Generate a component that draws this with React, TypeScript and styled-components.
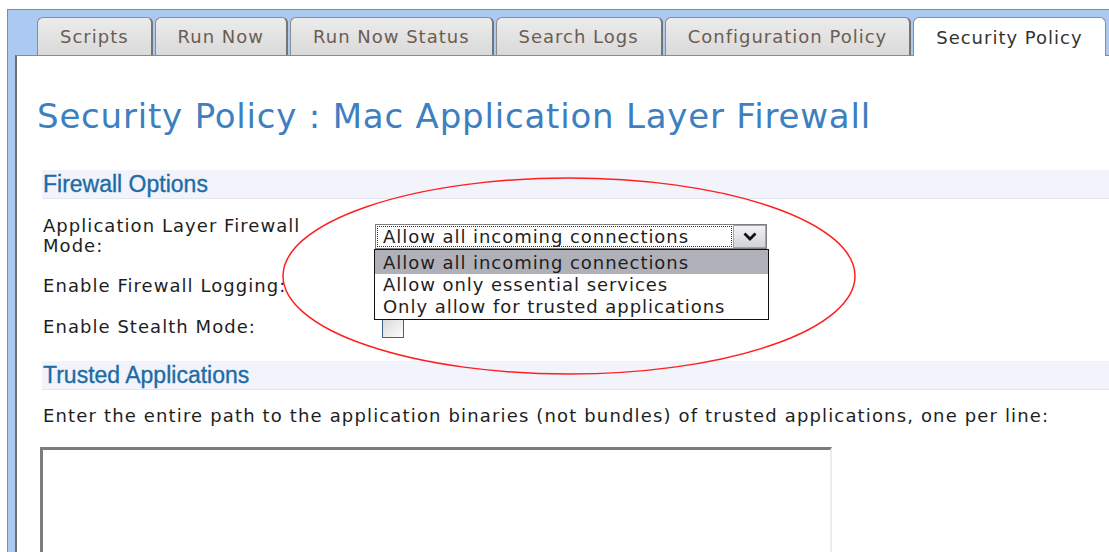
import React from 'react';
import styled, { createGlobalStyle } from 'styled-components';

const GlobalStyle = createGlobalStyle`
  html, body {
    margin: 0;
    padding: 0;
    background: #fff;
    overflow: hidden;
  }
`;

const tabs = ['Scripts', 'Run Now', 'Run Now Status', 'Search Logs', 'Configuration Policy', 'Security Policy'];
const modes = [
  'Allow all incoming connections',
  'Allow only essential services',
  'Only allow for trusted applications',
];

export default function App() {
  return (
    <>
      <GlobalStyle />
      <Page>
        <Frame>
          <TabBar>
            {tabs.map(t => (
              <Tab key={t} $active={t === 'Security Policy'}>
                {t}
              </Tab>
            ))}
          </TabBar>
          <Panel>
            <Title>Security Policy : Mac Application Layer Firewall</Title>

            <SectionBar>Firewall Options</SectionBar>
            <FormGrid>
              <Label>Application Layer Firewall Mode:</Label>
              <Field>
                <Select>
                  <SelectValue>{modes[0]}</SelectValue>
                  <SelectArrow>
                    <svg width='14' height='9' viewBox='0 0 14 9'>
                      <polyline points='1.5,1.5 7,7 12.5,1.5' fill='none' stroke='#111' strokeWidth='2.8' />
                    </svg>
                  </SelectArrow>
                  <OptionList>
                    {modes.map((m, i) => (
                      <Option key={m} $selected={i === 0}>
                        {m}
                      </Option>
                    ))}
                  </OptionList>
                </Select>
              </Field>

              <Label>Enable Firewall Logging:</Label>
              <Field>
                <CheckBox />
              </Field>

              <Label>Enable Stealth Mode:</Label>
              <Field>
                <CheckBox />
              </Field>
            </FormGrid>

            <SectionBar $gap={23}>Trusted Applications</SectionBar>
            <Hint>
              Enter the entire path to the application binaries (not bundles) of trusted applications, one per
              line:
            </Hint>
            <PathBox />
          </Panel>
        </Frame>

        {/* red marker drawn around the mode dropdown */}
        <Marker width='1109' height='552' viewBox='0 0 1109 552'>
          <ellipse cx='569' cy='276' rx='286' ry='98' fill='none' stroke='#ff1f1f' strokeWidth='1.5' />
        </Marker>
      </Page>
    </>
  );
}

const Page = styled.div`
  position: relative;
  width: 1109px;
  height: 552px;
  overflow: hidden;
  box-sizing: border-box;
  padding: 9px 0 0 7px;
  font-family: 'DejaVu Sans', Verdana, sans-serif;
`;

const Frame = styled.div`
  width: 1200px;
  border-top: 1px solid #8a8a8a;
  border-left: 1px solid #8a8a8a;
  background: #abc9f1;
  padding-left: 7px;
`;

const TabBar = styled.div`
  position: relative;
  z-index: 1;
  display: flex;
  align-items: flex-end;
  gap: 2px;
  padding: 7px 0 0 22px;
`;

const Tab = styled.div<{ $active?: boolean }>`
  box-sizing: border-box;
  height: ${p => (p.$active ? '39px' : '38px')};
  margin-bottom: ${p => (p.$active ? '-1px' : '0')};
  display: flex;
  align-items: center;
  padding: 0 22px;
  border: 1px solid #8c8c8c;
  border-bottom: none;
  border-right: ${p => (p.$active ? '1px solid #8c8c8c' : '2px solid #747474')};
  border-radius: 6px 6px 0 0;
  background: ${p => (p.$active ? '#fff' : 'linear-gradient(#ececec, #d9d9d9)')};
  color: ${p => (p.$active ? '#333' : '#6b5d51')};
  font-size: 18px;
  letter-spacing: 1px;
  white-space: nowrap;
`;

const Panel = styled.div`
  background: #fff;
  border-top: 1px solid #8a8a8a;
  border-left: 2px solid #6e6e6e;
  padding: 40px 0 0 25px;
  min-height: 520px;
`;

const Title = styled.h1`
  margin: 0 0 34px -5px;
  font-size: 34px;
  line-height: 40px;
  font-weight: normal;
  letter-spacing: 0.8px;
  color: #3d7fc0;
`;

const SectionBar = styled.div<{ $gap?: number }>`
  box-sizing: border-box;
  height: 29px;
  margin-top: ${p => p.$gap ?? 0}px;
  padding-left: 1px;
  background: #f2f3fb;
  border-bottom: 1px solid #e4e6f2;
  font-family: 'Liberation Sans', Arial, sans-serif;
  font-size: 23px;
  line-height: 28px;
  color: #1d6ca5;
  -webkit-text-stroke: 0.35px #1d6ca5;
`;

const FormGrid = styled.div`
  display: grid;
  grid-template-columns: 300px 1fr;
  column-gap: 33px;
  row-gap: 19px;
  align-items: center;
  padding-top: 17px;
`;

const Label = styled.div`
  padding-left: 1px;
  font-size: 18px;
  line-height: 20px;
  letter-spacing: 1.05px;
  color: #1e1e1e;
`;

const Field = styled.div`
  display: flex;
  align-items: center;
`;

const Select = styled.div`
  position: relative;
  box-sizing: border-box;
  width: 392px;
  height: 25px;
  display: flex;
  border: 1px solid #7f7f7f;
  background: #fff;
`;

const SelectValue = styled.div`
  flex: 1;
  margin: 1px;
  border: 1px dotted #333;
  padding-left: 5px;
  font-size: 18px;
  line-height: 19px;
  letter-spacing: 0.95px;
  color: #1e1e1e;
  white-space: nowrap;
`;

const SelectArrow = styled.div`
  width: 31px;
  display: flex;
  align-items: center;
  justify-content: center;
  border: 1px solid #a4a4a8;
  background: linear-gradient(#f2f2f5, #d2d2da);
`;

const OptionList = styled.div`
  position: absolute;
  z-index: 2;
  top: 24px;
  left: -2px;
  box-sizing: border-box;
  width: 395px;
  padding-bottom: 1px;
  border: 1px solid #111;
  background: #fff;
`;

const Option = styled.div<{ $selected?: boolean }>`
  height: 22px;
  padding: ${p => (p.$selected ? '2px' : '0')} 0 0 8px;
  background: ${p => (p.$selected ? '#b0b0b8' : '#fff')};
  font-size: 18px;
  line-height: 22px;
  letter-spacing: 0.95px;
  color: #1e1e1e;
  white-space: nowrap;
`;

const CheckBox = styled.div`
  box-sizing: border-box;
  width: 22px;
  height: 22px;
  margin-left: 7px;
  border: 1px solid #3e6189;
  background: linear-gradient(135deg, #d6d6d6, #fdfdfd);
`;

const Hint = styled.div`
  margin: 16px 0 0 1px;
  font-size: 18px;
  line-height: 20px;
  letter-spacing: 1.15px;
  color: #1e1e1e;
  white-space: nowrap;
`;

const PathBox = styled.div`
  box-sizing: border-box;
  width: 792px;
  height: 160px;
  margin: 21px 0 0 -2px;
  border-top: 3px solid #7c7c7c;
  border-left: 3px solid #7c7c7c;
  border-right: 2px solid #ececec;
  border-bottom: 2px solid #ececec;
  background: #fff;
`;

const Marker = styled.svg`
  position: absolute;
  left: 0;
  top: 0;
  z-index: 3;
  pointer-events: none;
`;
